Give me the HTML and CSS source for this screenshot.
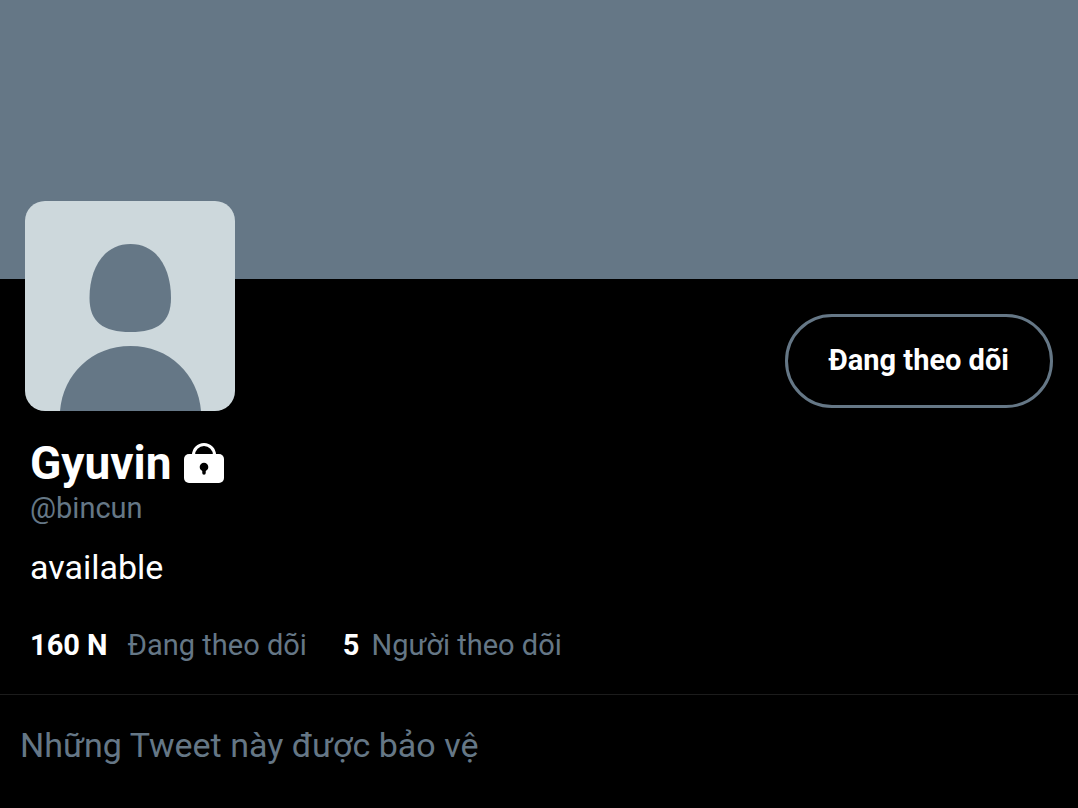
FILE: index.html
```html
<!DOCTYPE html>
<html lang="vi">
<head>
    <meta charset="UTF-8">
    <meta name="viewport" content="width=device-width, initial-scale=1.0">
    <title>Gyuvin (@bincun)</title>
    <link rel="stylesheet" href="styles.css">
</head>
<body>
    <div class="cover"></div>
    <main>
        <div class="top-row">
            <svg class="avatar" viewBox="0 0 210 210" role="img" aria-label="Gyuvin">
                <rect width="210" height="210" fill="#cdd8dc"/>
                <path d="M105.500 43C132 43 146 67 146 97C146 121 133 131 105.500 131C78 131 64.500 121 64.500 97C64.500 67 79 43 105.500 43Z" fill="#657786"/>
                <path d="M35 210C38 173 67 145 105.500 145C144 145 173 173 176 210Z" fill="#657786"/>
            </svg>
            <button class="follow-btn" type="button">Đang theo dõi</button>
        </div>
        <div class="info">
            <h1 class="name">Gyuvin
                <svg class="lock" viewBox="0 0 40 41" aria-hidden="true">
                    <path d="M9.500 14V12A10.500 10.500 0 0 1 30.500 12V14" fill="none" stroke="#fff" stroke-width="3"/>
                    <rect y="11" width="40" height="29" rx="5" fill="#fff"/>
                    <circle cx="20" cy="24" r="4.300" fill="#000"/>
                    <path d="M20 25V30" stroke="#000" stroke-width="3.500" stroke-linecap="round"/>
                </svg>
            </h1>
            <p class="handle">@bincun</p>
            <p class="bio">available</p>
            <div class="stats">
                <a class="following" href="#"><b>160 N</b> <span>Đang theo dõi</span></a>
                <a class="followers" href="#"><b>5</b> <span>Người theo dõi</span></a>
            </div>
        </div>
        <p class="notice">Những Tweet này được bảo vệ</p>
    </main>
</body>
</html>
```
FILE: styles.css
```css
body {
    margin: 0;
    background-color: #000;
    color: #fff;
    font-family: Roboto, sans-serif;
}
h1, p {
    margin: 0;
}
.cover {
    height: 279px;
    background-color: #657786;
}
.top-row {
    display: flex;
    justify-content: space-between;
    align-items: flex-end;
    margin-top: -78px;
    padding: 0 25px;
}
.avatar {
    width: 210px;
    height: 210px;
    border-radius: 20px;
}
.follow-btn {
    height: 94px;
    margin-bottom: 3px;
    padding: 0 41px 2px;
    border: 3px solid #657786;
    border-radius: 47px;
    background: none;
    color: #fff;
    font-family: inherit;
    font-size: 29px;
    font-weight: bold;
    cursor: pointer;
}
.info {
    padding: 25px 30px 31px;
    border-bottom: 1px solid #1c1c1c;
}
.name {
    display: flex;
    align-items: center;
    gap: 12px;
    font-size: 46px;
    line-height: 54px;
}
.lock {
    width: 40px;
    height: 41px;
}
.handle {
    color: #657786;
    font-size: 29px;
    line-height: 36px;
}
.bio {
    margin: 21px 0 40px;
    font-size: 34px;
    line-height: 40px;
}
.stats {
    display: flex;
    gap: 36px;
    font-size: 29px;
    line-height: 36px;
}
.stats a {
    display: flex;
    gap: 12px;
    color: #657786;
    text-decoration: none;
}
.stats .following {
    gap: 20px;
}
.stats b {
    color: #fff;
}
.notice {
    padding: 30px 20px;
    color: #657786;
    font-size: 34px;
    line-height: 40px;
}
```
